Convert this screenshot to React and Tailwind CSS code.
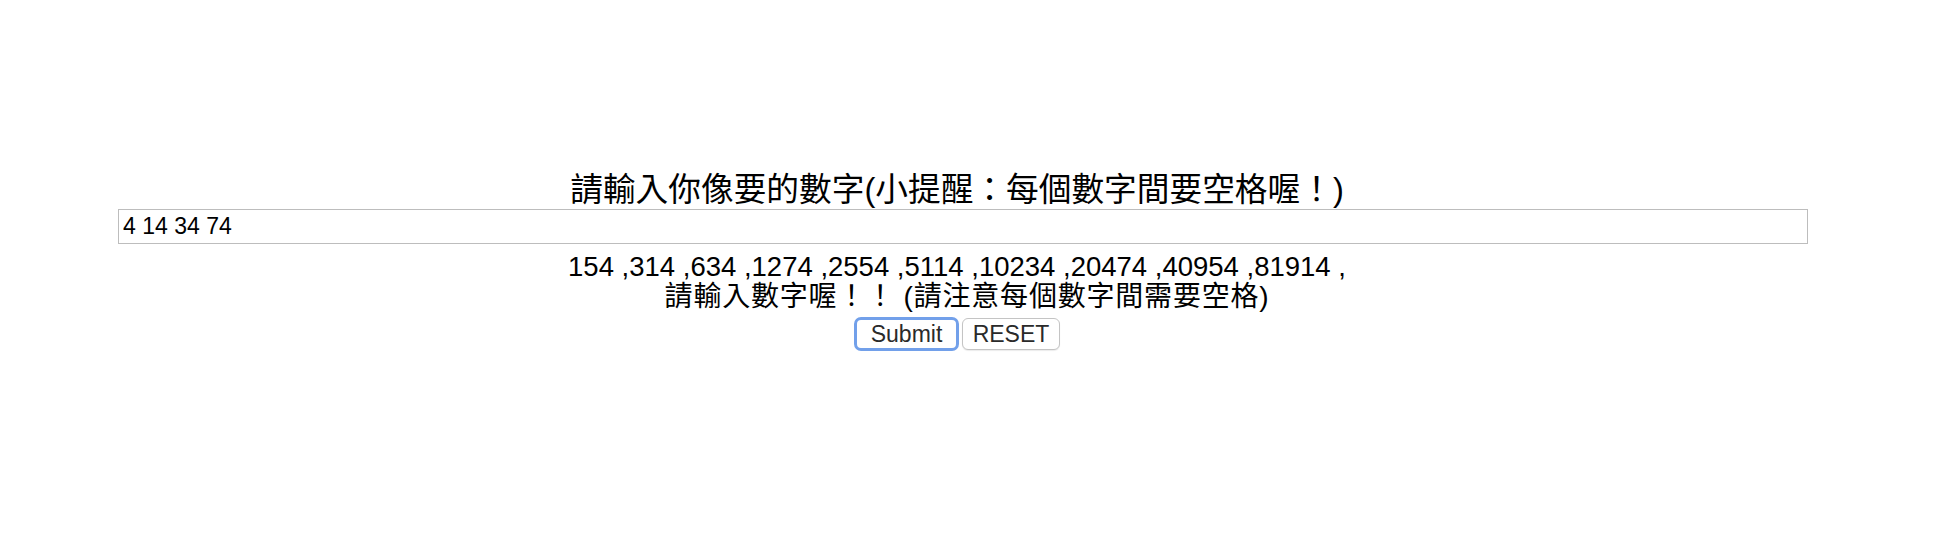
export default function App() {
  const font = { fontFamily: '"Liberation Sans", "Noto Sans CJK TC", sans-serif' };
  return (
    <div className="h-[547px] w-[1949px] bg-white text-black" style={font}>
      <div className="w-[1914px] pt-[171px] text-center">
        <div className="text-[32.7px] leading-[38px]">請輸入你像要的數字(小提醒：每個數字間要空格喔！)</div>
        <input
          defaultValue="4 14 34 74"
          className="ml-[118px] block h-[35px] w-[1690px] border border-[#bdbdbd] bg-white px-[4px] text-[23px] text-black outline-none"
          style={font}
        />
        <div className="mt-[7px] text-[27.5px] leading-[31px]">
          154 ,314 ,634 ,1274 ,2554 ,5114 ,10234 ,20474 ,40954 ,81914 ,
        </div>
        <div className="pl-[20px] text-[28px] leading-[30px] tracking-[0.8px]">請輸入數字喔！！ (請注意每個數字間需要空格)</div>
        <div className="mt-[5px] flex justify-center gap-[3px]">
          <button
            className="h-[34px] w-[105px] rounded-[7px] border-[3px] border-[#72a0ea] bg-white text-[23px] leading-none text-[#2a2a2a]"
            style={font}
          >
            Submit
          </button>
          <button
            className="mt-[1px] h-[32px] w-[98px] rounded-[6px] border border-[#c4c4c4] bg-white text-[23px] leading-none text-[#2a2a2a] shadow-[0_1px_1px_rgba(0,0,0,0.08)]"
            style={font}
          >
            RESET
          </button>
        </div>
      </div>
    </div>
  );
}
